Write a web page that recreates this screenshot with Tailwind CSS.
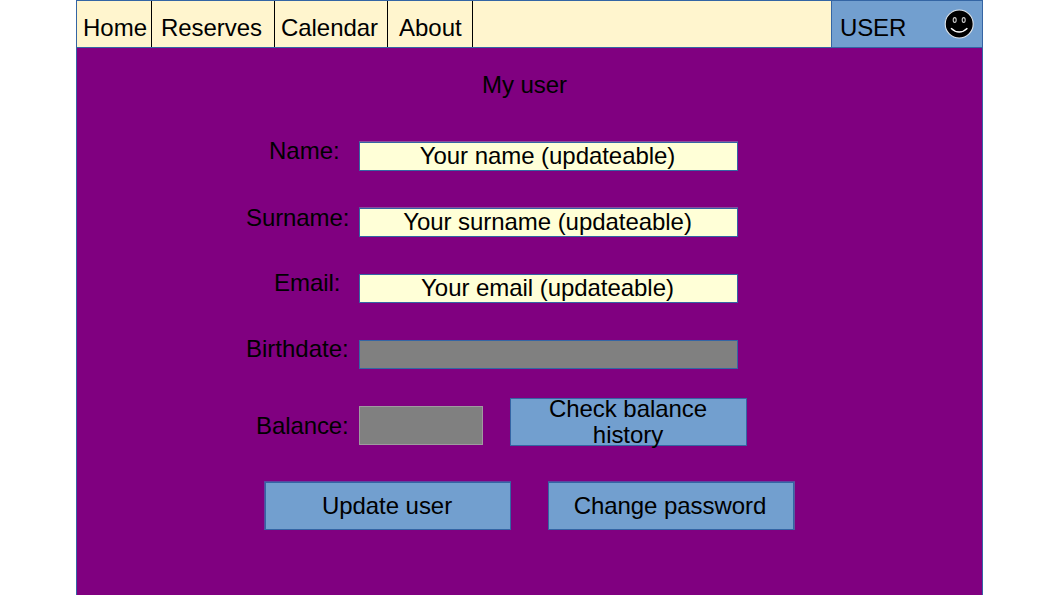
<!DOCTYPE html>
<html lang="en">
<head>
<meta charset="utf-8">
<title>My user</title>
<script src="https://cdn.jsdelivr.net/npm/@tailwindcss/browser@4"></script>
</head>
<body class="bg-white overflow-hidden">
<div class="ml-[76px] w-[907px] h-[595px] flex flex-col bg-[#800080] border-x border-[#3465a4] font-['Liberation_Sans',Arial,sans-serif] text-[24px] leading-[28px] tracking-[-0.05px] text-black whitespace-nowrap">
  <header class="h-12 shrink-0 flex border-y border-[#3465a4] bg-[#fff5ce]">
    <nav class="flex">
      <a class="w-[75px] border-r border-black pt-[13px] pl-[6px] tracking-normal">Home</a>
      <a class="w-[123px] border-r border-black pt-[13px] pl-[9px]">Reserves</a>
      <a class="w-[113px] border-r border-black pt-[13px] pl-[6px]">Calendar</a>
      <a class="w-[85px] border-r border-black pt-[13px] pl-[11px] tracking-normal">About</a>
    </nav>
    <div class="ml-auto w-[151px] border-l border-[#3465a4] bg-[#729fcf] flex justify-between pl-2 pr-[8px]">
      <span class="pt-[13px] tracking-[-0.15px]">USER</span>
      <svg class="mt-[8px] w-[30px] h-[30px]" viewBox="0 0 30 30" fill="none">
        <circle cx="15.2" cy="15" r="14" fill="#000" stroke="#e0e6ec" stroke-width="1.1"/>
        <ellipse cx="10.7" cy="11" rx="1.5" ry="2.4" stroke="#ccc" stroke-width="1.1"/>
        <ellipse cx="19.7" cy="11" rx="1.5" ry="2.4" stroke="#ccc" stroke-width="1.1"/>
        <path d="M7 19.2Q15.2 27 23.4 19.2" stroke="#fff" stroke-width="1.4"/>
      </svg>
    </div>
  </header>
  <main class="flex flex-col">
    <h1 class="mt-[23px] ml-[405px] h-7">My user</h1>
    <div class="mt-[38px] h-[34px] flex items-end">
      <label class="w-[282px] pl-[192px] self-start tracking-normal">Name:</label>
      <div class="w-[379px] h-[30px] pr-[2px] bg-[#ffffd7] border border-[#3465a4] border-t-[#8a4d9c] shadow-[inset_0_1px_0_#3465a4] text-center">Your name (updateable)</div>
    </div>
    <div class="mt-[33px] h-[33px] flex items-end">
      <label class="w-[282px] pl-[169px] self-start tracking-[-0.1px]">Surname:</label>
      <div class="w-[379px] h-[30px] pr-[2px] bg-[#ffffd7] border border-[#3465a4] border-t-[#8a4d9c] shadow-[inset_0_1px_0_#3465a4] text-center">Your surname (updateable)</div>
    </div>
    <div class="mt-[32px] h-[34px] flex items-end">
      <label class="w-[282px] pl-[197px] self-start">Email:</label>
      <div class="w-[379px] h-[29px] pr-[2px] bg-[#ffffd7] border border-[#3465a4] text-center leading-[26px]">Your email (updateable)</div>
    </div>
    <div class="mt-[32px] h-[34px] flex items-end">
      <label class="w-[282px] pl-[169px] self-start tracking-normal">Birthdate:</label>
      <div class="w-[379px] h-[29px] bg-[#808080] border border-[#3465a4]"></div>
    </div>
    <div class="mt-[29px] h-12 flex">
      <label class="w-[282px] pl-[179px] pt-[14px] tracking-[-0.1px]">Balance:</label>
      <div class="mt-2 w-[124px] h-[39px] bg-[#808080] border border-[#a09aa0]"></div>
      <button class="ml-[27px] w-[237px] h-12 pr-px bg-[#729fcf] border border-[#3465a4] flex flex-col leading-[26px] items-center justify-start"><span class="-mt-[3px]">Check balance</span><span>history</span></button>
    </div>
    <div class="mt-[35px] ml-[187px] flex gap-[37px]">
      <button class="w-[247px] h-[49px] pr-px bg-[#729fcf] border border-[#3465a4] border-t-[#5a48a0] border-l-[#5a48a0] shadow-[inset_1px_1px_0_#3465a4]">Update user</button>
      <button class="w-[247px] h-[49px] pr-[3px] bg-[#729fcf] border border-[#3465a4] border-t-[#5a48a0] border-r-[#5a58a0] shadow-[inset_-1px_1px_0_#3465a4]">Change password</button>
    </div>
  </main>
</div>
</body>
</html>
